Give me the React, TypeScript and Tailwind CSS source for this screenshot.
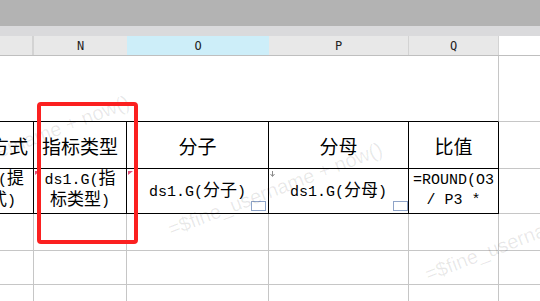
import React from "react"

const cjk = "text-[17px]"

function Marker({ kind }: { kind: "red" | "gray" }) {
  if (kind === "red") {
    return (
      <svg className="absolute left-[1px] top-[2px]" width="5" height="4" viewBox="0 0 5 4">
        <path d="M0 0 L5 0 L0 4 Z" fill="#e0507a" />
      </svg>
    )
  }
  return (
    <svg className="absolute left-[1px] top-[2px]" width="5" height="6" viewBox="0 0 5 6">
      <path d="M2.5 0 V5 M0.5 3 L2.5 5.5 L4.5 3" stroke="#8a8a8a" strokeWidth="1" fill="none" />
    </svg>
  )
}

function ExpandBox({ inset }: { inset: string }) {
  return <div className={`absolute bottom-[2px] ${inset} w-[15px] h-[10px] border border-[#8fa4c8] bg-white`} />
}

function Watermark({ left, top }: { left: string; top: string }) {
  return (
    <div
      className={`absolute ${left} ${top} origin-bottom-left -rotate-[21deg] whitespace-nowrap text-[20px] leading-[24px] text-black/[0.09] pointer-events-none`}
      style={{ fontFamily: '"Liberation Sans", Arial, sans-serif' }}
    >
      =$fine_username + now()
    </div>
  )
}

export default function App() {
  const cols = "grid grid-cols-[34px_93px_142px_140px_90px_1fr]"
  const mono = { fontFamily: '"Liberation Mono", "Noto Sans CJK SC", monospace' }
  const cjkFont = { fontFamily: '"Noto Sans CJK SC", "Liberation Sans", sans-serif' }

  return (
    <div className="relative w-[540px] h-[301px] overflow-hidden bg-white">
      {/* toolbar bands */}
      <div className="h-[26px] bg-[#b3b3b3]" />
      <div className="h-[10px] bg-[#dadadc]" />

      {/* column letters */}
      <div className={`${cols} h-[20px] border-b border-[#bfbfbf] text-[12px] text-[#222]`} style={{ fontFamily: '"DejaVu Sans Mono", monospace' }}>
        <div className="bg-[#e8e8e8] border-r-2 border-[#d3d3d3]" />
        <div className="bg-[#e8e8e8] flex items-center justify-center">N</div>
        <div className="bg-[#cdeef9] flex items-center justify-center">O</div>
        <div className="bg-[#e8e8e8] border-r border-[#d3d3d3] flex items-center justify-center">P</div>
        <div className="bg-[#e8e8e8] border-r border-[#d3d3d3] flex items-center justify-center">Q</div>
        <div />
      </div>

      {/* spacer row */}
      <div className={`${cols} h-[66px]`}>
        <div className="col-span-5 border-b border-r border-b-black border-r-[#c6c6c6]" />
        <div className="border-b border-[#c6c6c6]" />
      </div>

      {/* table header */}
      <div className={`${cols} h-[47px] text-[19px] text-black`} style={cjkFont}>
        <div className="border-r border-b border-black overflow-hidden whitespace-nowrap flex items-center justify-end pr-[5px] pt-[3px]">
          计算方式
        </div>
        <div className="border-r border-b border-black flex items-center justify-center pt-[3px]">指标类型</div>
        <div className="border-r border-b border-black flex items-center justify-center pt-[3px]">分子</div>
        <div className="border-r border-b border-black flex items-center justify-center pt-[3px]">分母</div>
        <div className="border-r border-b border-black flex items-center justify-center pt-[3px]">比值</div>
        <div className="border-b border-[#c6c6c6]" />
      </div>

      {/* data row */}
      <div className={`${cols} h-[45px] text-[15px] leading-[20px] text-black`} style={mono}>
        <div className="border-r border-b border-black overflow-hidden flex flex-col items-end justify-center pr-[9px] whitespace-nowrap">
          <span>(<span className={cjk}>提</span></span>
          <span className="mr-[8px]"><span className={cjk}>式</span>)</span>
        </div>
        <div className="relative border-r border-b border-black flex flex-col items-center justify-center">
          <Marker kind="red" />
          <span>ds1.G(<span className={cjk}>指</span></span>
          <span><span className={cjk}>标类型</span>)</span>
        </div>
        <div className="relative border-r border-b border-black flex items-center justify-center pt-[3px]">
          <Marker kind="red" />
          <span>ds1.G(<span className={cjk}>分子</span>)</span>
          <ExpandBox inset="right-[2px]" />
        </div>
        <div className="relative border-r border-b border-black flex items-center justify-center pt-[3px]">
          <Marker kind="gray" />
          <span>ds1.G(<span className={cjk}>分母</span>)</span>
          <ExpandBox inset="right-0" />
        </div>
        <div className="border-r border-b border-black flex flex-col items-center justify-center overflow-hidden whitespace-nowrap">
          <span>=ROUND(O3</span>
          <span>/ P3 *</span>
        </div>
        <div className="border-b border-[#c6c6c6]" />
      </div>

      {/* empty rows */}
      {["h-[37px]", "h-[34px]", "h-[40px]"].map((h, i) => (
        <div key={i} className={`${cols} ${h}`}>
          <div className="border-r border-b border-[#c6c6c6]" />
          <div className="border-r border-b border-[#c6c6c6]" />
          <div className="border-r border-b border-[#c6c6c6]" />
          <div className="border-r border-b border-[#c6c6c6]" />
          <div className="border-r border-b border-[#c6c6c6]" />
          <div className="border-b border-[#c6c6c6]" />
        </div>
      ))}

      {/* watermarks */}
      <Watermark left="left-[-80px]" top="top-[170px]" />
      <Watermark left="left-[173px]" top="top-[217px]" />
      <Watermark left="left-[430px]" top="top-[262px]" />

      {/* highlight box */}
      <div className="absolute left-[37px] top-[102px] w-[101px] h-[142px] border-[4px] border-[#fb2020] rounded-[4px]" />
    </div>
  )
}
